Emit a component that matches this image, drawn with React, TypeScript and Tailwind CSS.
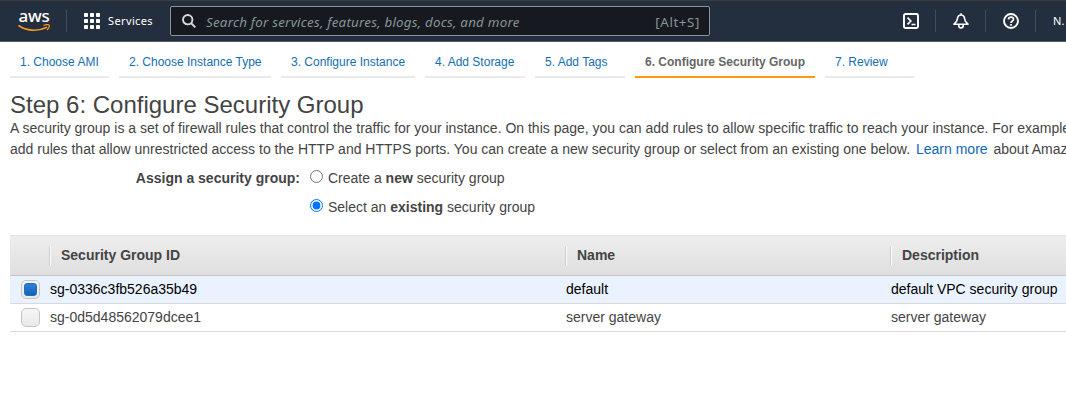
import React from "react";

const tabs = [
  { label: "1. Choose AMI", width: "w-[99px]" },
  { label: "2. Choose Instance Type", width: "w-[152px]" },
  { label: "3. Configure Instance", width: "w-[134px]" },
  { label: "4. Add Storage", width: "w-[100px]" },
  { label: "5. Add Tags", width: "w-[90px]" },
  { label: "6. Configure Security Group", width: "w-[180px]", active: true },
  { label: "7. Review", width: "w-[90px]" },
];

const groups = [
  { id: "sg-0336c3fb526a35b49", name: "default", description: "default VPC security group", selected: true },
  { id: "sg-0d5d48562079dcee1", name: "server gateway", description: "server gateway", selected: false },
];

function AwsLogo() {
  return (
    <div className="flex h-[24px] w-8 flex-col items-center">
      <span className="h-[15px] text-[17px] leading-[14px] font-medium tracking-[-0.2px] text-white">aws</span>
      <svg width="32" height="9" viewBox="0 0 32 9" className="block shrink-0" fill="none">
        <path d="M1 1.800C8 6.800 19 7.900 28.400 3.400" stroke="#f7981f" strokeWidth="1.700" strokeLinecap="round" />
        <path d="M26 1.300c2-.9 4.700-.9 5.100-.3.300.8-.3 3.300-1.700 4.700" stroke="#f7981f" strokeWidth="1.200" strokeLinecap="round" />
      </svg>
    </div>
  );
}

function GridIcon() {
  const stops = [0, 6, 12];
  return (
    <svg width="16" height="16" viewBox="0 0 16 16" fill="#fff">
      {stops.map((y) => stops.map((x) => <rect key={`${x}-${y}`} x={x} y={y} width="4" height="4" rx=".7" />))}
    </svg>
  );
}

const Divider = () => <div className="h-[22px] w-px shrink-0 bg-[#414c58]" />;

function TopBar() {
  return (
    <header className="flex h-[42px] items-center overflow-hidden border-t border-b border-t-[#3b3b3b] border-b-[#545b64] bg-[#232f3e] font-['Noto_Sans',sans-serif]">
      <div className="ml-[18px] w-[48px] shrink-0"><AwsLogo /></div>
      <Divider />
      <div className="ml-[17px] flex w-[86px] shrink-0 items-center gap-2">
        <GridIcon />
        <span className="-mt-px text-[11px] tracking-[0.38px] text-white">Services</span>
      </div>
      <div className="flex h-[30px] w-[540px] shrink-0 items-center rounded-[2px] border border-[#879596] bg-[#16191f] pr-[9px] pl-[11px] text-[#879596]">
        <svg width="14" height="14" viewBox="0 0 14 14" fill="none" stroke="#d5dbdb" strokeWidth="1.900">
          <circle cx="5.700" cy="5.700" r="4.700" />
          <path d="m9 9 4.300 4.300" />
        </svg>
        <span className="ml-[10px] flex-1 pt-[2px] text-[13.333px] tracking-[0.23px] whitespace-nowrap italic">Search for services, features, blogs, docs, and more</span>
        <span className="pt-[2px] text-[13.333px] tracking-[0.6px]">[Alt+S]</span>
      </div>
      <div className="ml-[193px] flex w-8 shrink-0">
        <svg width="16" height="16" viewBox="0 0 16 16" fill="none" stroke="#fff" strokeWidth="1.900">
          <rect x="1" y="1" width="14" height="14" rx="1.500" />
          <path d="m4.500 4.700 3.300 3.300-3.300 3.300M8.500 11.500h4" strokeWidth="1.700" />
        </svg>
      </div>
      <Divider />
      <div className="ml-[17px] flex w-8 shrink-0">
        <svg width="16" height="16" viewBox="0 0 16 16" fill="none" stroke="#fff" strokeWidth="1.600" strokeLinejoin="round">
          <path d="M8 2C5.600 2 4.600 3.700 4.400 5.800 4.200 8.300 3 9.500 1 11.200h14C13 9.500 11.800 8.300 11.600 5.800 11.400 3.700 10.400 2 8 2ZM8 .2V2" />
          <path d="M5.800 11.700v.8c0 3.200 4.400 3.200 4.400 0v-.8" />
        </svg>
      </div>
      <Divider />
      <div className="ml-[17px] flex w-8 shrink-0">
        <svg width="16" height="16" viewBox="0 0 16 16" fill="none" stroke="#fff" strokeWidth="1.900">
          <circle cx="8" cy="8" r="7" />
          <path d="M5.500 6.500C5.500 3.300 10.500 3.500 10.500 6.300 10.500 8 8 7.900 8 9.900M8 11v1.800" strokeWidth="1.700" />
        </svg>
      </div>
      <Divider />
      <span className="-mt-px ml-[17px] shrink-0 text-[11px] tracking-[0.2px] whitespace-nowrap text-white">N.</span>
    </header>
  );
}

function HeaderCell({ children }: { children: React.ReactNode }) {
  return (
    <div className="flex items-center">
      <div className="h-[18px] w-[2px] border-r border-l border-r-white border-l-[#ccc]" />
      <span className="pl-[10px]">{children}</span>
    </div>
  );
}

function SelectBox({ selected }: { selected: boolean }) {
  return (
    <div className="flex h-[19px] w-[19px] items-center justify-center rounded-[5px] border border-[#c4c4c4] bg-linear-to-b from-[#f6f6f6] to-[#e9e9e9]">
      {selected && <div className="h-[13px] w-[13px] rounded-[3px] border border-[#1b6fc4] bg-linear-to-b from-[#2b80d6] to-[#1463b8]" />}
    </div>
  );
}

export default function App() {
  return (
    <div className="h-[410px] w-full overflow-hidden bg-white font-['Liberation_Sans',Arial,sans-serif] text-[14px] leading-[21px] text-[#444]">
      <TopBar />
      <nav className="flex gap-[10px] pl-[10px] text-[12px]">
        {tabs.map((tab) => (
          <div
            key={tab.label}
            className={`${tab.width} h-9 shrink-0 border-b-2 pt-[10px] pl-[10px] leading-5 whitespace-nowrap ${
              tab.active ? "border-[#ff9914] font-bold text-[#666]" : "border-[#eaeaea] text-[#146eb4]"
            }`}
          >
            {tab.label}
          </div>
        ))}
      </nav>
      <main className="pl-[10px]">
        <h1 className="pt-[13px] text-[24px] leading-[27px]">Step 6: Configure Security Group</h1>
        <div className="whitespace-nowrap">
          <p>
            A security group is a set of firewall rules that control the traffic for your instance. On this page, you can add rules to allow specific traffic to reach your instance. For example
          </p>
          <p>
            add rules that allow unrestricted access to the HTTP and HTTPS ports. You can create a new security group or select from an existing one below.{" "}
            <a className="mx-[2px] text-[#0f67ba]">Learn more</a> about Amaz
          </p>
        </div>
        <div className="flex pt-2">
          <div className="w-[290px] text-right font-bold">Assign a security group:</div>
          <div className="flex flex-col gap-2 pl-[10px]">
            <label className="flex items-start gap-[5px]">
              <input type="radio" name="assign" className="mt-[2px] h-[13px] w-[13px]" />
              <span>Create a <b>new</b> security group</span>
            </label>
            <label className="flex items-start gap-[5px]">
              <input type="radio" name="assign" defaultChecked className="mt-[2px] h-[13px] w-[13px]" />
              <span>Select an <b>existing</b> security group</span>
            </label>
          </div>
        </div>
        <section className="mt-[17px] w-[1200px]">
          <div className="grid h-[41px] grid-cols-[39px_516px_325px_1fr] border-t border-b border-t-[#e2e2e2] border-b-[#c6c6c6] bg-linear-to-b from-[#eeeeee] to-[#dfdfdf] font-bold">
            <div />
            <HeaderCell>Security Group ID</HeaderCell>
            <HeaderCell>Name</HeaderCell>
            <HeaderCell>Description</HeaderCell>
          </div>
          {groups.map((group) => (
            <div
              key={group.id}
              className={`grid h-7 grid-cols-[40px_516px_325px_1fr] items-center border-b border-[#d9d9d9] ${
                group.selected ? "bg-[#eaf2ff] text-black" : "bg-white"
              }`}
            >
              <div className="pl-[11px]"><SelectBox selected={group.selected} /></div>
              <div>{group.id}</div>
              <div>{group.name}</div>
              <div>{group.description}</div>
            </div>
          ))}
        </section>
      </main>
    </div>
  );
}
